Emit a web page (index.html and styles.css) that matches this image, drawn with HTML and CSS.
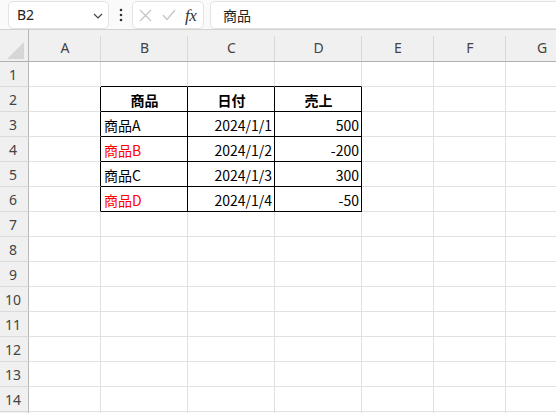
FILE: index.html
```html
<!DOCTYPE html>
<html lang="ja">
<head>
<meta charset="utf-8">
<link rel="stylesheet" href="styles.css">
</head>
<body>
<div class="app">
  <div class="toolbar">
    <div class="namebox">
      <span class="name">B2</span>
      <svg class="chev" width="10" height="6" viewBox="0 0 10 6"><path d="M1 1 L5 5 L9 1" fill="none" stroke="#444" stroke-width="1.2"/></svg>
    </div>
    <svg class="dots" width="4" height="14" viewBox="0 0 4 14"><circle cx="2" cy="2" r="1.3" fill="#333"/><circle cx="2" cy="7" r="1.3" fill="#333"/><circle cx="2" cy="12" r="1.3" fill="#333"/></svg>
    <div class="fxbox">
      <svg width="13" height="13" viewBox="0 0 13 13"><path d="M1 1 L12 12 M12 1 L1 12" stroke="#c4c4c4" stroke-width="1.2" fill="none"/></svg>
      <svg width="14" height="12" viewBox="0 0 14 12"><path d="M1 6 L5 10.5 L13 1" stroke="#c4c4c4" stroke-width="1.2" fill="none"/></svg>
      <span class="fx">fx</span>
    </div>
    <div class="formula">商品</div>
  </div>
  <div class="sheet">
    <div class="row head">
      <div class="corner"><svg width="18" height="17" viewBox="0 0 18 17"><path d="M17 0 L17 17 L0 17 Z" fill="#d6d6d6"/></svg></div>
      <div class="ch">A</div><div class="ch">B</div><div class="ch">C</div><div class="ch">D</div><div class="ch">E</div><div class="ch">F</div><div class="ch">G</div>
    </div>
    <div class="row"><div class="rh">1</div><div class="c"></div><div class="c tt"></div><div class="c tt"></div><div class="c tt"></div><div class="c"></div><div class="c"></div><div class="c"></div></div>
    <div class="row"><div class="rh">2</div><div class="c tl"></div><div class="c tb bold center">商品</div><div class="c tb bold center">日付</div><div class="c tb bold center">売上</div><div class="c"></div><div class="c"></div><div class="c"></div></div>
    <div class="row"><div class="rh">3</div><div class="c tl"></div><div class="c tb">商品A</div><div class="c tb right">2024/1/1</div><div class="c tb right">500</div><div class="c"></div><div class="c"></div><div class="c"></div></div>
    <div class="row"><div class="rh">4</div><div class="c tl"></div><div class="c tb red">商品B</div><div class="c tb right">2024/1/2</div><div class="c tb right">-200</div><div class="c"></div><div class="c"></div><div class="c"></div></div>
    <div class="row"><div class="rh">5</div><div class="c tl"></div><div class="c tb">商品C</div><div class="c tb right">2024/1/3</div><div class="c tb right">300</div><div class="c"></div><div class="c"></div><div class="c"></div></div>
    <div class="row"><div class="rh">6</div><div class="c tl"></div><div class="c tb red">商品D</div><div class="c tb right">2024/1/4</div><div class="c tb right">-50</div><div class="c"></div><div class="c"></div><div class="c"></div></div>
    <div class="row"><div class="rh">7</div><div class="c"></div><div class="c"></div><div class="c"></div><div class="c"></div><div class="c"></div><div class="c"></div><div class="c"></div></div>
    <div class="row"><div class="rh">8</div><div class="c"></div><div class="c"></div><div class="c"></div><div class="c"></div><div class="c"></div><div class="c"></div><div class="c"></div></div>
    <div class="row"><div class="rh">9</div><div class="c"></div><div class="c"></div><div class="c"></div><div class="c"></div><div class="c"></div><div class="c"></div><div class="c"></div></div>
    <div class="row"><div class="rh">10</div><div class="c"></div><div class="c"></div><div class="c"></div><div class="c"></div><div class="c"></div><div class="c"></div><div class="c"></div></div>
    <div class="row"><div class="rh">11</div><div class="c"></div><div class="c"></div><div class="c"></div><div class="c"></div><div class="c"></div><div class="c"></div><div class="c"></div></div>
    <div class="row"><div class="rh">12</div><div class="c"></div><div class="c"></div><div class="c"></div><div class="c"></div><div class="c"></div><div class="c"></div><div class="c"></div></div>
    <div class="row"><div class="rh">13</div><div class="c"></div><div class="c"></div><div class="c"></div><div class="c"></div><div class="c"></div><div class="c"></div><div class="c"></div></div>
    <div class="row"><div class="rh">14</div><div class="c"></div><div class="c"></div><div class="c"></div><div class="c"></div><div class="c"></div><div class="c"></div><div class="c"></div></div>
    <div class="row"><div class="rh"></div><div class="c"></div><div class="c"></div><div class="c"></div><div class="c"></div><div class="c"></div><div class="c"></div><div class="c"></div></div>
  </div>
</div>
</body>
</html>
```
FILE: styles.css
```css
* { box-sizing: border-box; }
html, body { margin: 0; padding: 0; background: #ffffff; }
body { width: 556px; height: 413px; overflow: hidden; font-family: "Noto Sans CJK JP", "Noto Sans", sans-serif; color: #000; }
.app { width: 556px; height: 413px; overflow: hidden; }

.toolbar { height: 29px; display: flex; align-items: flex-start; padding: 1px 0 0 8px; background: #fafafa; }
.namebox { width: 101px; height: 28px; border: 1px solid #e3e3e3; border-radius: 5px; background: #fff; display: flex; align-items: center; justify-content: space-between; padding: 0 5px 0 8px; }
.name { font-family: "Noto Sans", sans-serif; font-size: 14px; color: #222; line-height: 1; }
.chev { margin-top: 1px; }
.dots { margin: 7px 9px 0 10px; }
.fxbox { width: 72px; height: 28px; border: 1px solid #e3e3e3; border-radius: 5px; background: #fff; display: flex; align-items: center; padding: 0 0 0 6px; gap: 10px; }
.fx { font-family: "Liberation Serif", serif; font-style: italic; font-size: 17px; color: #333; line-height: 1; margin-left: -1px; letter-spacing: -0.5px; }
.formula { flex: 1; height: 28px; margin-left: 6px; border: 1px solid #e3e3e3; border-right: none; border-radius: 5px 0 0 5px; background: #fff; font-size: 14px; line-height: 26px; padding-left: 12px; color: #222; }

.sheet { width: 578px; }
.row { display: grid; grid-template-columns: 29px 72px 87px 87px 87px 72px 72px 72px; height: 25px; }
.row.head { height: 33px; }
.corner { border-top: 1px solid #d2d2d2; border-right: 1px solid #b8b8b8; border-bottom: 1px solid #b0b0b0; background: #f0f0f0; display: flex; align-items: flex-end; justify-content: flex-end; padding: 0 3px 2px 0; }
.ch { border-top: 1px solid #d2d2d2; border-bottom: 1px solid #b0b0b0; background: #f0f0f0 linear-gradient(#d8d8d8, #d8d8d8) right bottom / 1px 25px no-repeat; font-family: "Noto Sans", sans-serif; font-size: 14px; color: #444; display: flex; align-items: center; justify-content: center; padding-top: 3px; }
.rh { background: #f0f0f0; border-right: 1px solid #b8b8b8; border-bottom: 1px solid #dadada; font-family: "Noto Sans", sans-serif; font-size: 14px; color: #444; display: flex; align-items: center; justify-content: center; padding-right: 2px; }
.c { border-right: 1px solid #e1e1e1; border-bottom: 1px solid #e1e1e1; font-size: 14px; line-height: 1; display: flex; align-items: center; padding: 1px 2px 0 3px; white-space: nowrap; }
.tt { border-bottom-color: #000; }
.tl { border-right-color: #000; }
.tb { border-right-color: #000; border-bottom-color: #000; }
.bold { font-weight: 700; }
.center { justify-content: center; }
.right { justify-content: flex-end; }
.red { color: #ff0000; }
```
